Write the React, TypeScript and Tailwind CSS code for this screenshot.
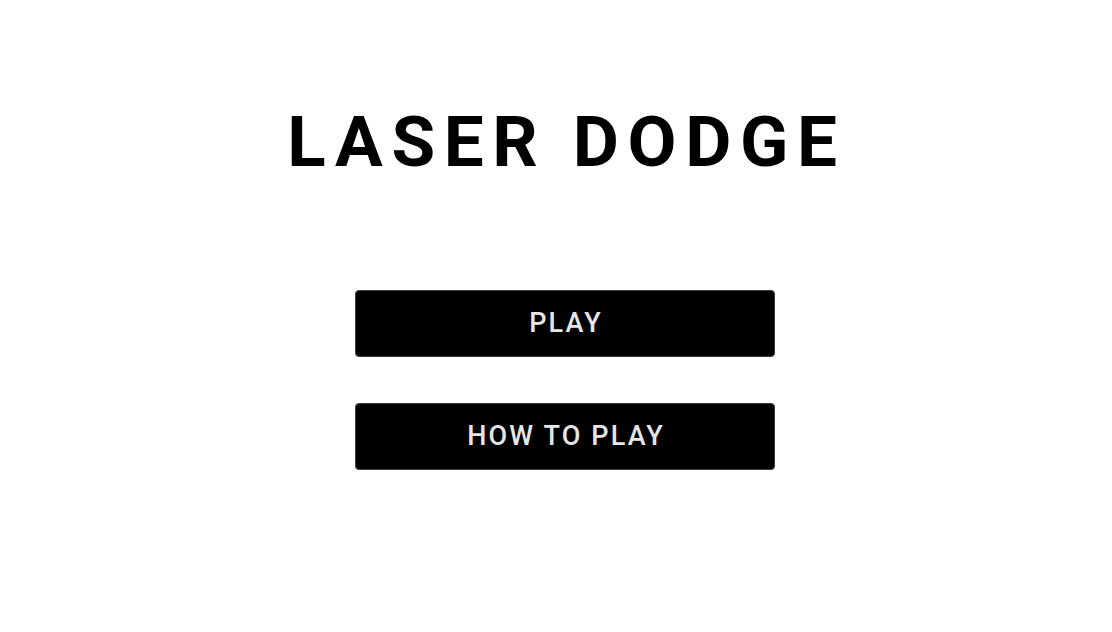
export default function App() {
  return (
    <main className="flex h-[632px] w-full flex-col items-center bg-white pl-[18px] font-['Roboto',sans-serif]">
      <h1 className="mt-[106px] ml-[3px] text-[71px] leading-none font-bold tracking-[0.122em] text-black">LASER DODGE</h1>
      <div className="mt-[113px] flex flex-col gap-[46px]">
        <button className="h-[67px] w-[420px] rounded-[4px] border border-[#3a3a3a] bg-black pl-[2px] text-[27px] font-medium tracking-[0.08em] text-[#e6e6e6]">
          PLAY
        </button>
        <button className="h-[67px] w-[420px] rounded-[4px] border border-[#3a3a3a] bg-black pl-[2px] text-[27px] font-medium tracking-[0.08em] text-[#e6e6e6]">
          HOW TO PLAY
        </button>
      </div>
    </main>
  );
}
